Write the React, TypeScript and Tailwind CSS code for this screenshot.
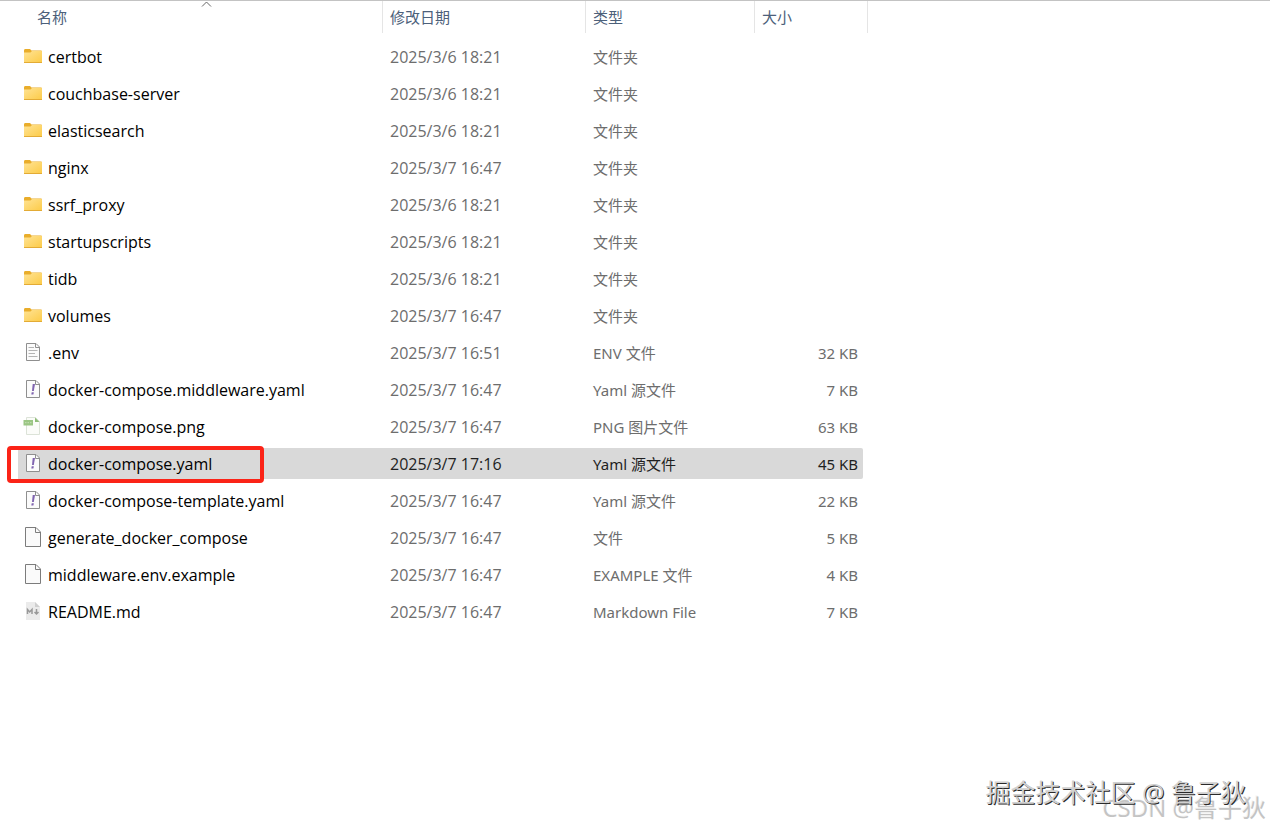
import clsx from 'clsx';

type Kind = 'folder' | 'text' | 'yaml' | 'png' | 'blank' | 'markdown';

interface FileItem {
  name: string;
  date: string;
  type: string;
  size?: string;
  kind: Kind;
  selected?: boolean;
}

const files: FileItem[] = [
  { name: 'certbot', date: '2025/3/6 18:21', type: '文件夹', kind: 'folder' },
  { name: 'couchbase-server', date: '2025/3/6 18:21', type: '文件夹', kind: 'folder' },
  { name: 'elasticsearch', date: '2025/3/6 18:21', type: '文件夹', kind: 'folder' },
  { name: 'nginx', date: '2025/3/7 16:47', type: '文件夹', kind: 'folder' },
  { name: 'ssrf_proxy', date: '2025/3/6 18:21', type: '文件夹', kind: 'folder' },
  { name: 'startupscripts', date: '2025/3/6 18:21', type: '文件夹', kind: 'folder' },
  { name: 'tidb', date: '2025/3/6 18:21', type: '文件夹', kind: 'folder' },
  { name: 'volumes', date: '2025/3/7 16:47', type: '文件夹', kind: 'folder' },
  { name: '.env', date: '2025/3/7 16:51', type: 'ENV 文件', size: '32 KB', kind: 'text' },
  { name: 'docker-compose.middleware.yaml', date: '2025/3/7 16:47', type: 'Yaml 源文件', size: '7 KB', kind: 'yaml' },
  { name: 'docker-compose.png', date: '2025/3/7 16:47', type: 'PNG 图片文件', size: '63 KB', kind: 'png' },
  { name: 'docker-compose.yaml', date: '2025/3/7 17:16', type: 'Yaml 源文件', size: '45 KB', kind: 'yaml', selected: true },
  { name: 'docker-compose-template.yaml', date: '2025/3/7 16:47', type: 'Yaml 源文件', size: '22 KB', kind: 'yaml' },
  { name: 'generate_docker_compose', date: '2025/3/7 16:47', type: '文件', size: '5 KB', kind: 'blank' },
  { name: 'middleware.env.example', date: '2025/3/7 16:47', type: 'EXAMPLE 文件', size: '4 KB', kind: 'blank' },
  { name: 'README.md', date: '2025/3/7 16:47', type: 'Markdown File', size: '7 KB', kind: 'markdown' },
];

function FileIcon({ kind }: { kind: Kind }) {
  return (
    <svg width="20" height="20" viewBox="0 0 20 20" fill="none" className="shrink-0" aria-hidden="true">
      {kind === 'folder' && (
        <>
          <defs>
            <linearGradient id="folder" x1="0" y1="0" x2="1" y2="1">
              <stop offset="0" stopColor="#ffe394" />
              <stop offset="1" stopColor="#fccb48" />
            </linearGradient>
          </defs>
          <path d="M1 4.5Q1 3 2 3H7L8.5 4.5H18Q19 4.5 19 5.5V9H1Z" fill="#e9ad2b" />
          <path d="M1 6.5H7.5L9 5H18.5Q19 5 19 5.5V16.5H1Z" fill="url(#folder)" />
          <path d="M1 16.5H19" stroke="#e3ab35" />
        </>
      )}
      {(kind === 'text' || kind === 'yaml') && (
        <>
          <path d="M3.5 1.5H13L16.5 5V18.5H3.5Z" fill="#fbfbfb" stroke="#8f8f8f" />
          <path d="M12.5 1.5V5.5H16.5" stroke="#8f8f8f" />
        </>
      )}
      {kind === 'text' && (
        <path d="M5.5 5.5H11M5.5 8.5H14.5M5.5 11.5H12M5.5 14.5H14.5" stroke="#b4b4b4" />
      )}
      {kind === 'yaml' && (
        <>
          <path d="M9.7 5H12L10.8 12H9Z" fill="#8064b0" />
          <path d="M8.7 13.2H10.8L10.4 15.4H8.3Z" fill="#8064b0" />
        </>
      )}
      {kind === 'png' && (
        <>
          <path d="M3.5 1.5H12.5L16.5 5.5V18.5H3.5Z" fill="#fbfcf9" stroke="#dce3d8" />
          <path d="M12 1.5V6H16.5Z" fill="#8fbd78" />
          <path d="M0.5 4H10V9.5H0.5Z" fill="#9bc684" />
          <path d="M2 6.7H8.5" stroke="#c5dfb7" strokeDasharray="1.5 1" />
        </>
      )}
      {kind === 'blank' && (
        <>
          <path d="M2.5 0.5H13L17.5 5V19.5H2.5Z" fill="#fafafa" stroke="#7c7c7c" />
          <path d="M12.5 0.5V5.5H17.5" stroke="#7c7c7c" />
        </>
      )}
      {kind === 'markdown' && (
        <>
          <path d="M3 1H12L17 6V19H3Z" fill="#ebebeb" />
          <path d="M12 1L17 6H12Z" fill="#cfcfcf" />
          <path d="M4.5 13V8.5L6.7 11L9 8.5V13" stroke="#999999" strokeWidth="1.5" />
          <path d="M13.5 8V13M11.5 11L13.5 13L15.5 11" stroke="#999999" strokeWidth="1.5" />
        </>
      )}
    </svg>
  );
}

function FileRow({ file }: { file: FileItem }) {
  const cell = clsx(
    'flex h-[31px] items-center whitespace-nowrap',
    file.selected ? 'bg-[#d9d9d9] text-[#1f1f1f]' : 'text-[#6d6d6d]'
  );

  return (
    <tr className="h-[37px]">
      <td className="relative p-0">
        <div className={clsx(cell, 'gap-[5px] pl-[5px]')}>
          <div className="pb-0.5">
            <FileIcon kind={file.kind} />
          </div>
          <span className="text-base leading-5 text-black">{file.name}</span>
        </div>
        {file.selected && (
          <div className="absolute top-px -left-[11px] h-[37px] w-[257px] rounded-sm border-4 border-[#fb2317]" />
        )}
      </td>
      <td className="p-0">
        <div className={clsx(cell, 'pl-[7px] text-base leading-5')}>{file.date}</div>
      </td>
      <td className="p-0 font-['Noto_Sans','Noto_Sans_CJK_SC',sans-serif]">
        <div className={clsx(cell, 'pl-[7px]')}>{file.type}</div>
      </td>
      <td className="p-0 pr-[5px] font-['Noto_Sans','Noto_Sans_CJK_SC',sans-serif]">
        <div className={clsx(cell, 'justify-end rounded-r-xs pr-[5px]')}>{file.size}</div>
      </td>
    </tr>
  );
}

export default function App() {
  return (
    <div className="relative min-h-screen overflow-hidden border-t border-[#c3c3c3] bg-white font-['Open_Sans','Noto_Sans_CJK_SC',sans-serif] text-[15px] leading-5">
      <table className="ml-[18px] table-fixed border-collapse">
        <colgroup>
          <col className="w-[365px]" />
          <col className="w-[203px]" />
          <col className="w-[169px]" />
          <col className="w-[113px]" />
        </colgroup>
        <thead>
          <tr className="h-[37px] text-left align-top text-[#4c607a]">
            <th scope="col" aria-sort="ascending" className="relative p-0 font-normal">
              <div className="flex h-8 items-center border-r border-[#e5e5e5] pl-[19px]">名称</div>
              <svg width="11" height="6" viewBox="0 0 11 6" fill="none" className="absolute top-0 left-[183px]" aria-hidden="true">
                <path d="M1 5.5L5.5 1L10 5.5" stroke="#666666" />
              </svg>
            </th>
            <th scope="col" className="p-0 font-normal">
              <div className="flex h-8 items-center border-r border-[#e5e5e5] pl-[7px]">修改日期</div>
            </th>
            <th scope="col" className="p-0 font-normal">
              <div className="flex h-8 items-center border-r border-[#e5e5e5] pl-[7px]">类型</div>
            </th>
            <th scope="col" className="p-0 font-normal">
              <div className="flex h-8 items-center border-r border-[#e5e5e5] pl-[7px]">大小</div>
            </th>
          </tr>
        </thead>
        <tbody>
          {files.map(file => (
            <FileRow key={file.name} file={file} />
          ))}
        </tbody>
      </table>

      <div className="absolute right-1 bottom-1.5 text-2xl leading-8 whitespace-nowrap text-[#c4c4c4] [text-shadow:-1px_-1px_0_#f5f5f5]">
        CSDN @鲁子狄
      </div>
      <div className="absolute right-6 bottom-5 text-[25px] leading-9 whitespace-nowrap text-[#d0d0d0] [text-shadow:1px_1px_0_#2a2a2a]">
        掘金技术社区 @ 鲁子狄
      </div>
    </div>
  );
}
